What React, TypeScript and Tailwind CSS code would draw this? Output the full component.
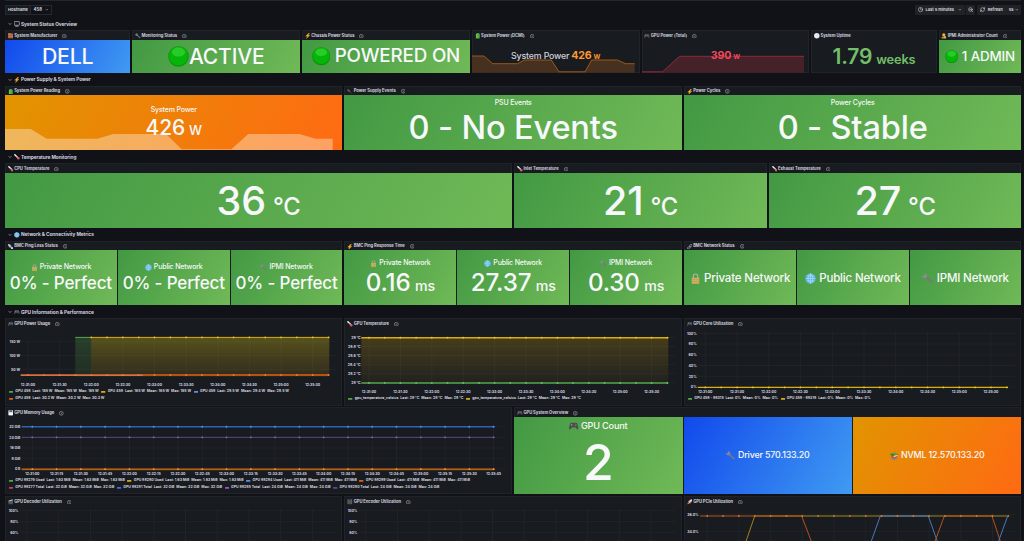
import React from 'react';
import { ChevronDown, Clock, RefreshCw, ZoomOut } from 'lucide-react';

type Tone = 'green' | 'blue' | 'orange';

const tones: Record<Tone, string> = {
  green: 'bg-[linear-gradient(120deg,#429943,#70b957)]',
  blue: 'bg-[linear-gradient(120deg,#1149ec,#409bf2)]',
  orange: 'bg-[linear-gradient(120deg,#e19400,#ff6a13)]',
};

const icons: Record<string, React.ReactNode> = {
  dot: (
    <>
      <circle cx="8" cy="8" r="7.8" fill="#079407" />
      <circle cx="8" cy="7.6" r="7.2" fill="#06b50a" />
      <ellipse cx="8" cy="4.6" rx="5" ry="3.4" fill="#3fdc3d" opacity="0.6" />
    </>
  ),
  bricks: (
    <>
      <rect x="0" y="1" width="16" height="14" fill="#a8553a" />
      <path d="M0 5h16M0 10h16M5 1v4M11 5v5M5 10v5M12 10v5" stroke="#d9a58c" strokeWidth="1" />
      <rect x="1" y="1" width="6" height="3" fill="#d98f58" />
    </>
  ),
  monitor: (
    <>
      <rect x="0.8" y="1.5" width="14.4" height="10.5" rx="1" fill="#16181c" stroke="#d5d8e0" strokeWidth="1.6" />
      <path d="M3.5 14.6h9" stroke="#d5d8e0" strokeWidth="2" />
    </>
  ),
  wrench: (
    <>
      <path d="M5.5 5.5L14 13.5" stroke="#7b7681" strokeWidth="3" strokeLinecap="round" />
      <path d="M1 3.5a3 3 0 0 0 5.6 2A3 3 0 0 0 4 1l.6 2.6L3.2 5z" fill="#8f8d97" stroke="#8f8d97" strokeWidth="1" />
    </>
  ),
  bolt: <path d="M11 0L2 9h5l-3 7 10-9.5H9L13 0z" fill="#ffb02a" stroke="#ffb02a" strokeWidth="0.8" />,
  battery: (
    <>
      <rect x="5.5" y="0" width="5" height="2" fill="#a9b4a5" />
      <rect x="2.5" y="1.5" width="11" height="14.5" rx="1.5" fill="#4caf3d" />
      <path d="M5 3v11" stroke="#9be07f" strokeWidth="1.4" />
    </>
  ),
  gamepad: (
    <>
      <path
        d="M3.5 3h9c2 0 3.3 7.5 3.3 9.8 0 2-2.3 1.8-3 .3L11.6 11H4.4l-1.2 2.1c-.7 1.5-3 1.7-3-.3 0-2.3 1.3-9.8 3.3-9.8z"
        fill="#4b4d53"
      />
      <path d="M3 6.5h3M4.5 5v3" stroke="#a5a7ad" strokeWidth="0.9" />
      <circle cx="11.6" cy="5.4" r="0.9" fill="#e0463f" />
      <circle cx="13" cy="7" r="0.8" fill="#4f8ce0" />
      <circle cx="10.5" cy="7" r="0.8" fill="#d7a73b" />
    </>
  ),
  clock: (
    <>
      <circle cx="8" cy="8" r="7.8" fill="#eceef2" />
      <path d="M8 4v4l3 2" stroke="#a8abb3" strokeWidth="0.9" fill="none" />
    </>
  ),
  person: (
    <>
      <circle cx="8" cy="5" r="4.5" fill="#f2b632" />
      <path d="M1 16c0-5 3-7 7-7s7 2 7 7z" fill="#c98e22" />
      <rect x="9" y="9" width="5" height="6" fill="#ddb860" />
    </>
  ),
  thermometer: (
    <>
      <path d="M2.5 2l9 9" stroke="#f0f0f4" strokeWidth="4" strokeLinecap="round" />
      <path d="M7 6.6l5 5" stroke="#d8454c" strokeWidth="2" />
      <circle cx="12.2" cy="12.2" r="3.6" fill="#dc5a62" />
    </>
  ),
  plug: (
    <>
      <path d="M3 3l5 5" stroke="#666a70" strokeWidth="4" />
      <path d="M8 8c4 0 2 6 7 6" stroke="#4d5157" strokeWidth="1.6" fill="none" />
      <path d="M1 4l2-3M4 1L1 3" stroke="#b59a5a" strokeWidth="1.2" />
    </>
  ),
  globe: (
    <>
      <circle cx="8" cy="8" r="7.6" fill="#59b2e2" />
      <path
        d="M1 8h14M8 1v14M2.4 4.5h11.2M2.4 11.5h11.2M8 .8C3.4 4.6 3.4 11.4 8 15.2M8 .8c4.6 3.8 4.6 10.6 0 14.4"
        stroke="#c9e9f8"
        strokeWidth="0.8"
        fill="none"
      />
    </>
  ),
  lock: (
    <>
      <path d="M4.8 8V4.6a3.2 3.2 0 0 1 6.4 0V8" stroke="#b0b3a6" strokeWidth="1.7" fill="none" />
      <rect x="2.4" y="7" width="11.2" height="8.6" rx="1.2" fill="#d2b061" />
      <path d="M2.8 9.6h10.4M2.8 12.4h10.4" stroke="#b8954a" strokeWidth="0.8" />
    </>
  ),
  satellite: (
    <>
      <path d="M0 0l7 2 1 6-6-1z" fill="#eceef2" />
      <path d="M8 8l6 1 2 7-7-2z" fill="#d4d7de" />
      <path d="M4 5l7 6M5 11l5-6" stroke="#c5c9d0" strokeWidth="2.4" />
    </>
  ),
  link: (
    <g fill="none" stroke="#c4c7d0" strokeWidth="1.8">
      <rect x="7" y="2" width="8" height="5" rx="2.5" transform="rotate(-45 11 4.5)" />
      <rect x="1" y="8.5" width="8" height="5" rx="2.5" transform="rotate(-45 5 11)" />
    </g>
  ),
  floppy: (
    <>
      <rect x="1" y="1" width="14" height="14" rx="1" fill="#dfe4ea" />
      <rect x="4" y="1" width="8" height="5" fill="#5c6772" />
      <rect x="3" y="9" width="10" height="6" fill="#ffffff" />
    </>
  ),
  clapper: (
    <>
      <rect x="1" y="6" width="14" height="9" fill="#4c5056" />
      <path d="M1 5l12-4 1 3-12 3z" fill="#c7cad0" />
      <path d="M2 9h12" stroke="#8c9097" />
    </>
  ),
  film: (
    <>
      <rect x="1" y="1" width="14" height="14" fill="#474b51" />
      <path d="M3 1v14M13 1v14" stroke="#8d9198" strokeDasharray="2 1.5" strokeWidth="1.4" />
      <path d="M5 8h6" stroke="#8d9198" />
    </>
  ),
  rocket: (
    <>
      <path d="M15 1C9 1 5 6 4 9l3 3c3-1 8-5 8-11z" fill="#cfd3da" />
      <path d="M8 3L3 6 2 9l4-1M13 8l-3 5-3 1 1-4" fill="#d8454c" />
      <path d="M4 10c-2 1-3 3-3 5 2 0 4-1 5-3z" fill="#f0a02e" />
    </>
  ),
  books: (
    <>
      <path d="M1 3l8-2.4L15 3 7 6z" fill="#4aa84a" />
      <path d="M1 3.4v2.4L7 9V6.4L15 3.8v2" fill="#2f7d38" />
      <path d="M2 7l6 3 6-3v3l-6 3-6-3z" fill="#c94f46" />
      <path d="M3 11l6 2.6 6-3.2v2.2L9 16l-6-2.6z" fill="#4a86c6" />
      <path d="M7.4 8.6L15 5.8v1.6L8 10z" fill="#ece7d8" />
    </>
  ),
};

const Icon = ({ name, className = '' }: { name: string; className?: string }) => (
  <svg viewBox="0 0 16 16" className={`shrink-0 ${className}`}>
    {icons[name]}
  </svg>
);

const RowTitle = ({ icon, title }: { icon: string; title: string }) => (
  <div className="flex h-[13px] items-center pl-[3px] pt-[1px]">
    <ChevronDown className="mr-[2.2px] size-[4px]" strokeWidth={3.5} />
    <Icon name={icon} className="mr-[1.1px] size-[5.7px]" />
    <span className="whitespace-nowrap text-[4.77px] font-bold leading-none tracking-[-0.01em]">{title}</span>
  </div>
);

interface PanelProps {
  icon: string;
  title: string;
  span: string;
  info?: boolean;
  children: React.ReactNode;
}

const Panel = ({ icon, title, span, info = true, children }: PanelProps) => (
  <div className={`flex min-w-0 flex-col bg-[#181b1f] shadow-[inset_0_0_0_1px_#202328] ${span}`}>
    <div className="flex h-[9.7px] shrink-0 items-center pl-[2.8px] pt-[1.8px]">
      <Icon name={icon} className="mr-[0.8px] size-[5.6px]" />
      <span className="whitespace-nowrap text-[4.17px] font-bold leading-none tracking-[-0.01em]">{title}</span>
      {info && (
        <svg viewBox="0 0 12 12" className="ml-[5px] size-[4.6px]" fill="none" stroke="#a4a5b2" strokeWidth="1.6">
          <circle cx="6" cy="6" r="5" />
          <path d="M6 5.4V9M6 3v1.2" />
        </svg>
      )}
    </div>
    <div className="flex min-h-0 flex-1 gap-px">{children}</div>
  </div>
);

const Cell = ({ tone, className = '', children }: { tone?: Tone; className?: string; children: React.ReactNode }) => (
  <div
    className={`relative flex min-w-0 flex-1 flex-col items-center overflow-hidden whitespace-nowrap font-[550] tracking-[-0.01em] ${
      tone ? `text-[#f7f8fa] ${tones[tone]}` : ''
    } ${className}`}
  >
    {children}
  </div>
);

const Spark = ({ box, points, fill, stroke }: { box: string; points: string; fill: string; stroke?: string }) => {
  const [w, h] = box.split(' ');
  const pts = points.split(' ');
  const first = pts[0].split(',')[0];
  const last = pts[pts.length - 1].split(',')[0];
  return (
    <svg className="absolute left-0 top-0" width={w} height={h} viewBox={`0 0 ${w} ${h}`}>
      <polygon points={`${first},${h} ${points} ${last},${h}`} fill={fill} />
      {stroke && <polyline points={points} fill="none" stroke={stroke} strokeWidth="0.8" />}
    </svg>
  );
};

interface Line {
  color: string;
  points: string;
  width?: number;
  opacity?: number;
  area?: string;
}

interface ChartProps {
  width: number;
  height: number;
  left: number;
  right: number;
  base: number;
  y: [string, number][];
  x0: number;
  step: number;
  times?: string[];
  timeY?: number;
  lines?: Line[];
  marks?: { y: number; color: string; from?: number }[];
  markStep?: number;
}

const Chart = ({
  width,
  height,
  left,
  right,
  base,
  y,
  x0,
  step,
  times = halfMinutes,
  timeY,
  lines = [],
  marks = [],
  markStep = step / 2,
}: ChartProps) => {
  const top = y[0][1] - 2;
  const count = Math.floor((right - x0) / markStep + 0.1) + 1;
  return (
    <svg width={width} height={height} viewBox={`0 0 ${width} ${height}`} className="shrink-0">
      <defs>
        <linearGradient id="olive" x1="0" y1="0" x2="0" y2="1">
          <stop offset="0" stopColor="#d0bd18" stopOpacity="0.34" />
          <stop offset="1" stopColor="#d0a018" stopOpacity="0.13" />
        </linearGradient>
        <linearGradient id="amber" x1="0" y1="0" x2="0" y2="1">
          <stop offset="0" stopColor="#d8a510" stopOpacity="0.24" />
          <stop offset="1" stopColor="#d8a510" stopOpacity="0.05" />
        </linearGradient>
        <linearGradient id="moss" x1="0" y1="0" x2="0" y2="1">
          <stop offset="0" stopColor="#56a64b" stopOpacity="0.27" />
          <stop offset="1" stopColor="#56a64b" stopOpacity="0.12" />
        </linearGradient>
      </defs>
      <g stroke="#24272c" strokeWidth="0.7">
        {y.map(([label, py]) => (
          <line key={label} x1={left} x2={width - 6} y1={py} y2={py} />
        ))}
        {times.map((t, i) => (
          <line key={t} x1={x0 + i * step} x2={x0 + i * step} y1={top} y2={base} />
        ))}
      </g>
      {lines.map((l, i) => {
        const pts = l.points.split(' ');
        const a = pts[0].split(',')[0];
        const b = pts[pts.length - 1].split(',')[0];
        return (
          <g key={i}>
            {l.area && <polygon points={`${a},${base} ${l.points} ${b},${base}`} fill={l.area} />}
            <polyline points={l.points} fill="none" stroke={l.color} strokeWidth={l.width ?? 1} opacity={l.opacity} />
          </g>
        );
      })}
      {marks.map((m, i) =>
        Array.from({ length: count }, (_, k) => x0 + k * markStep)
          .filter((x) => x >= (m.from ?? 0))
          .map((x) => <circle key={`${i}-${x}`} cx={x} cy={m.y} r="0.9" fill={m.color} />),
      )}
      <g fill="#d4d4e2" className="text-[3.5px] font-bold tracking-[-0.01em]">
        {y.map(([label, py]) => (
          <text key={label} x={left - 1} y={py + 1.4} textAnchor="end">
            {label}
          </text>
        ))}
        {timeY &&
          times.map((t, i) => (
            <text key={t} x={x0 + i * step} y={timeY + 1.5} textAnchor="middle">
              {t}
            </text>
          ))}
      </g>
    </svg>
  );
};

const clockTimes = (count: number, seconds: number) =>
  Array.from({ length: count }, (_, i) => {
    const s = 31 * 60 + i * seconds;
    return `12:${Math.floor(s / 60)}:${String(s % 60).padStart(2, '0')}`;
  });

const halfMinutes = clockTimes(10, 30);
const quarterMinutes = clockTimes(20, 15);

const Legend = ({ items }: { items: [string, string, string, string, string][] }) => (
  <div className="flex h-[7px] items-center gap-[2.6px] whitespace-nowrap pl-[4px] pt-[1px] text-[3.55px] font-bold leading-none">
    {items.map(([color, name, last, mean, max], i) => (
      <div key={i} className="flex items-center gap-[1.9px]">
        <svg width="4.4" height="1.8">
          <rect width="4.4" height="1.8" rx="0.6" fill={color} />
        </svg>
        <span>{name}</span>
        <span>Last: {last}</span>
        <span>Mean: {mean}</span>
        <span>Max: {max}</span>
      </div>
    ))}
  </div>
);

const networks = [
  { icon: 'lock', name: 'Private Network', ping: '0.16' },
  { icon: 'globe', name: 'Public Network', ping: '27.37' },
  { icon: 'wrench', name: 'IPMI Network', ping: '0.30' },
];

const GREEN = '#56a64b';
const YELLOW = '#d6ae14';
const BLUE = '#5b92dd';
const ORANGE = '#e0600f';

const Temperature = ({ value }: { value: string }) => (
  <Cell tone="green" className="justify-center pt-[2px]">
    <div className="flex items-baseline gap-[7px] leading-none">
      <span className="text-[39.5px]">{value}</span>
      <span className="text-[23.8px] font-medium">°C</span>
    </div>
  </Cell>
);

const TopBar = () => (
  <div className="flex h-[17.2px] items-start justify-between border-t border-[#23262b] pt-[4px] text-[4px] font-bold leading-none">
    <div className="flex h-[10px] border border-[#25282e]">
      <span className="flex items-center border-r border-[#25282e] bg-[#181b1f] px-[2px]">Hostname</span>
      <span className="flex items-center gap-[3px] px-[2.5px] text-[4.3px]">
        458
        <ChevronDown className="size-[3.5px]" strokeWidth={3} />
      </span>
    </div>
    <div className="flex gap-[2px]">
      <div className="flex h-[10px] w-[60.5px] items-center rounded-[1px] bg-[#202226] pl-[3px] pr-[2.5px]">
        <Clock className="mr-[2.4px] size-[5.2px]" strokeWidth={2.6} />
        <span className="whitespace-nowrap">Last 5 minutes</span>
        <ChevronDown className="ml-auto mr-[3px] size-[3.5px]" strokeWidth={3.5} />
        <span className="mr-[2px] h-[10px] w-px bg-[#15171b]" />
        <ZoomOut className="size-[5.4px]" strokeWidth={2.6} />
      </div>
      <div className="flex h-[10px] w-[44px] items-center rounded-[1px] bg-[#202226] px-[3px]">
        <RefreshCw className="mr-[2px] size-[5.2px]" strokeWidth={2.6} />
        <span>Refresh</span>
        <span className="ml-auto mr-[1.5px]">5s</span>
        <ChevronDown className="size-[3.5px]" strokeWidth={3.5} />
      </div>
    </div>
  </div>
);

const App: React.FC = () => {
  return (
    <div className="h-[541px] w-[1024px] overflow-hidden bg-[#111217] pl-[5px] pr-[2.55px] font-['Inter',sans-serif] text-[#d0d0de]">
      <TopBar />

      <RowTitle icon="monitor" title="System Status Overview" />
      <div className="grid h-[42.5px] grid-cols-24 gap-x-[2px]">
        <Panel icon="bricks" title="System Manufacturer" span="col-span-3">
          <Cell tone="blue" className="justify-center text-[21.3px] leading-none">
            DELL
          </Cell>
        </Panel>
        <Panel icon="wrench" title="Monitoring Status" span="col-span-4">
          <Cell tone="green" className="justify-center">
            <div className="flex items-center text-[21px] leading-none">
              <Icon name="dot" className="size-[21px]" />
              <span>ACTIVE</span>
            </div>
          </Cell>
        </Panel>
        <Panel icon="bolt" title="Chassis Power Status" span="col-span-4">
          <Cell tone="green" className="justify-center">
            <div className="flex items-center gap-[4.5px] text-[18.8px] leading-none">
              <Icon name="dot" className="size-[18.5px]" />
              <span>POWERED ON</span>
            </div>
          </Cell>
        </Panel>
        <Panel icon="battery" title="System Power (DCMI)" span="col-span-4">
          <Cell className="justify-center">
            <Spark
              box="168 32.8"
              points="0,16 12,16 20.7,23.7 45.7,23.7 52.3,20 79.3,20 87,31.8 113,31.8 119.7,20 145.3,20 153.7,23.7 162.7,23.7"
              fill="#46301f"
              stroke="#b86414"
            />
            <div className="relative flex items-baseline gap-[2px] leading-none">
              <span className="text-[8.8px]">System Power</span>
              <span className="text-[10.6px] font-bold text-[#ff9830]">426</span>
              <span className="text-[6.6px] font-bold text-[#ff9830]">W</span>
            </div>
          </Cell>
        </Panel>
        <Panel icon="gamepad" title="GPU Power (Total)" span="col-span-4">
          <Cell className="justify-center">
            <Spark box="168 32.8" points="0,31.8 20.5,31.8 37.5,16.3 162,16.3" fill="#452229" stroke="#a52d40" />
            <div className="relative flex items-baseline gap-[2px] font-bold leading-none text-[#f2495c]">
              <span className="text-[10.6px]">390</span>
              <span className="text-[6.6px]">W</span>
            </div>
          </Cell>
        </Panel>
        <Panel icon="clock" title="System Uptime" span="col-span-3" info={false}>
          <Cell className="justify-center">
            <div className="flex items-baseline gap-[4px] font-semibold leading-none text-[#73bf69]">
              <span className="text-[21px]">1.79</span>
              <span className="text-[12.8px]">weeks</span>
            </div>
          </Cell>
        </Panel>
        <Panel icon="person" title="IPMI Administrator Count" span="col-span-2">
          <Cell tone="green" className="justify-center">
            <div className="flex items-center gap-[3.5px] text-[13.4px] leading-none">
              <Icon name="dot" className="size-[13.3px]" />
              <span>1 ADMIN</span>
            </div>
          </Cell>
        </Panel>
      </div>

      <RowTitle icon="bolt" title="Power Supply & System Power" />
      <div className="grid h-[64.5px] grid-cols-24 gap-x-[2px]">
        <Panel icon="battery" title="System Power Reading" span="col-span-8">
          <Cell tone="orange" className="pt-[8px]">
            <Spark
              box="338 55"
              points="0,34 25.7,34 41.7,43.7 92.3,43.7 108.3,39 161,39 176.7,54.3 226.3,54.3 243.3,39 294.3,39 310.7,43.7 327.7,43.7"
              fill="rgba(255,236,215,0.42)"
            />
            <div className="relative text-[7px] leading-[13px]">System Power</div>
            <div className="relative flex items-baseline gap-[4px] leading-[24px]">
              <span className="text-[21px]">426</span>
              <span className="text-[13px]">W</span>
            </div>
          </Cell>
        </Panel>
        <Panel icon="plug" title="Power Supply Events" span="col-span-8">
          <Cell tone="green">
            <div className="pt-[1px] text-[7px] leading-[13px]">PSU Events</div>
            <div className="text-[32.6px] leading-[37px]">0 - No Events</div>
          </Cell>
        </Panel>
        <Panel icon="bolt" title="Power Cycles" span="col-span-8">
          <Cell tone="green">
            <div className="pt-[1px] text-[7px] leading-[13px]">Power Cycles</div>
            <div className="text-[32.6px] leading-[37px]">0 - Stable</div>
          </Cell>
        </Panel>
      </div>

      <RowTitle icon="thermometer" title="Temperature Monitoring" />
      <div className="grid h-[64.5px] grid-cols-24 gap-x-[2px]">
        <Panel icon="thermometer" title="CPU Temperature" span="col-span-12">
          <Temperature value="36" />
        </Panel>
        <Panel icon="thermometer" title="Inlet Temperature" span="col-span-6">
          <Temperature value="21" />
        </Panel>
        <Panel icon="thermometer" title="Exhaust Temperature" span="col-span-6">
          <Temperature value="27" />
        </Panel>
      </div>

      <RowTitle icon="globe" title="Network & Connectivity Metrics" />
      <div className="grid h-[64.5px] grid-cols-24 gap-x-[2px]">
        <Panel icon="satellite" title="BMC Ping Loss Status" span="col-span-8">
          {networks.map((n) => (
            <Cell key={n.name} tone="green" className="pt-[10px]">
              <div className="flex items-center gap-[2px] text-[7px] leading-[14px]">
                <Icon name={n.icon} className="size-[7px]" />
                {n.name}
              </div>
              <div className="text-[17px] leading-[18px]">0% - Perfect</div>
            </Cell>
          ))}
        </Panel>
        <Panel icon="bolt" title="BMC Ping Response Time" span="col-span-8">
          {networks.map((n) => (
            <Cell key={n.name} tone="green" className="pt-[6px]">
              <div className="flex items-center gap-[2px] text-[7px] leading-[14px]">
                <Icon name={n.icon} className="size-[7px]" />
                {n.name}
              </div>
              <div className="flex items-baseline gap-[4.5px] leading-[26px]">
                <span className="text-[24.2px]">{n.ping}</span>
                <span className="text-[14.2px]">ms</span>
              </div>
            </Cell>
          ))}
        </Panel>
        <Panel icon="link" title="BMC Network Status" span="col-span-8">
          {networks.map((n) => (
            <Cell key={n.name} tone="green" className="justify-center pt-[1.5px]">
              <div className="flex items-center gap-[3.5px] text-[11.5px] leading-none">
                <Icon name={n.icon} className="size-[11px]" />
                {n.name}
              </div>
            </Cell>
          ))}
        </Panel>
      </div>

      <RowTitle icon="gamepad" title="GPU Information & Performance" />
      <div className="grid grid-cols-24 gap-x-[2px] gap-y-[1.8px]">
        <Panel icon="gamepad" title="GPU Power Usage" span="col-span-8 h-[87.5px]">
          <div>
            <Chart
              width={337}
              height={60}
              left={16}
              right={324.3}
              base={48.5}
              x0={23}
              step={31.63}
              y={[['150 W', 13.7], ['100 W', 27.4], ['50 W', 41.3]]}
              timeY={56.8}
              lines={[
                { color: GREEN, points: '70.3,9.4 86.3,9.4', area: 'url(#moss)' },
                { color: YELLOW, points: '86.3,9.4 324.3,9.4', area: 'url(#olive)' },
                { color: ORANGE, points: '15.7,47 324.3,47', width: 1.7 },
                { color: '#e8a0b0', points: '15.7,47.3 138,47.3', width: 0.7, opacity: 0.8 },
              ]}
              marks={[{ y: 9.4, color: '#f0c81c', from: 86 }, { y: 47, color: '#f47a2c' }]}
            />
            <Legend
              items={[
                [GREEN, 'GPU 458', '165 W', '165 W', '165 W'],
                [YELLOW, 'GPU 458', '165 W', '165 W', '165 W'],
                [BLUE, 'GPU 458', '29.5 W', '29.4 W', '29.5 W'],
              ]}
            />
            <Legend items={[[ORANGE, 'GPU 458', '30.2 W', '30.2 W', '30.3 W']]} />
          </div>
        </Panel>
        <Panel icon="thermometer" title="GPU Temperature" span="col-span-8">
          <div>
            <Chart
              width={337}
              height={67}
              left={17.5}
              right={324.3}
              base={55}
              x0={25}
              step={31.4}
              y={[
                ['29 °C', 9.5],
                ['28.8 °C', 18.5],
                ['28.6 °C', 27.6],
                ['28.4 °C', 36.7],
                ['28.2 °C', 45.7],
                ['28 °C', 54.8],
              ]}
              timeY={63.7}
              lines={[
                { color: YELLOW, points: '17.3,9.7 324.3,9.7', width: 1.5, area: 'url(#amber)' },
                { color: GREEN, points: '17.3,54.9 324.3,54.9', width: 1.5 },
              ]}
              marks={[{ y: 9.7, color: '#f0c81c' }, { y: 54.9, color: '#73bf69' }]}
            />
            <Legend
              items={[
                [GREEN, 'gpu_temperature_celsius', '28 °C', '28 °C', '28 °C'],
                [YELLOW, 'gpu_temperature_celsius', '29 °C', '29 °C', '29 °C'],
              ]}
            />
          </div>
        </Panel>
        <Panel icon="gamepad" title="GPU Core Utilization" span="col-span-8">
          <div>
            <Chart
              width={337}
              height={67}
              left={13.7}
              right={324}
              base={59}
              x0={21.3}
              step={31.74}
              y={[['100%', 5.3], ['80%', 16], ['60%', 26.8], ['40%', 37.5], ['20%', 48.3], ['0%', 59]]}
              timeY={63.7}
              lines={[{ color: YELLOW, points: '13.7,59.4 324,59.4', width: 1.4 }]}
              marks={[{ y: 59.4, color: '#f0c81c' }]}
            />
            <Legend
              items={[
                [GREEN, 'GPU 458 - 88315', '0%', '0%', '0%'],
                [YELLOW, 'GPU 458 - 88318', '0%', '0%', '0%'],
              ]}
            />
          </div>
        </Panel>

        <Panel icon="floppy" title="GPU Memory Usage" span="col-span-12 h-[87px]">
          <div>
            <Chart
              width={507}
              height={60}
              left={16.3}
              right={489.5}
              base={52.5}
              x0={27.3}
              step={24.28}
              times={quarterMinutes}
              y={[['32 GiB', 9.7], ['24 GiB', 20.3], ['16 GiB', 31], ['8 GiB', 41.7], ['0 B', 52]]}
              timeY={56.8}
              markStep={24.28}
              lines={[
                { color: '#2f62b4', points: '16.7,9.7 489.5,9.7', width: 1.6 },
                { color: '#5f4b8b', points: '16.7,20.3 489.5,20.3', width: 0.9 },
                { color: '#b98a12', points: '16.7,52.7 489.5,52.7', width: 0.8 },
                { color: ORANGE, points: '16.7,52 489.5,52', width: 1.1 },
              ]}
              marks={[
                { y: 9.7, color: '#5794f2' },
                { y: 20.3, color: '#8470b5' },
                { y: 52.2, color: '#ff9830' },
              ]}
            />
            <Legend
              items={[
                [GREEN, 'GPU 88276 Used', '1.63 MiB', '1.63 MiB', '1.63 MiB'],
                [YELLOW, 'GPU 88280 Used', '1.63 MiB', '1.63 MiB', '1.63 MiB'],
                [BLUE, 'GPU 88284 Used', '411 MiB', '411 MiB', '411 MiB'],
                [ORANGE, 'GPU 88289 Used', '411 MiB', '411 MiB', '411 MiB'],
              ]}
            />
            <Legend
              items={[
                ['#d8384c', 'GPU 88277 Total', '32 GiB', '32 GiB', '32 GiB'],
                ['#3871dc', 'GPU 88281 Total', '32 GiB', '32 GiB', '32 GiB'],
                ['#a352cc', 'GPU 88285 Total', '24 GiB', '24 GiB', '24 GiB'],
                ['#5f4b8b', 'GPU 88290 Total', '24 GiB', '24 GiB', '24 GiB'],
              ]}
            />
          </div>
        </Panel>
        <Panel icon="gamepad" title="GPU System Overview" span="col-span-12">
          <Cell tone="green">
            <div className="flex items-center gap-[2px] text-[9.1px] leading-[18px]">
              <Icon name="gamepad" className="size-[9.5px]" />
              GPU Count
            </div>
            <div className="text-[50px] leading-[54px]">2</div>
          </Cell>
          <Cell tone="blue" className="justify-center">
            <div className="flex items-center gap-[3px] text-[8.9px] leading-none">
              <Icon name="wrench" className="size-[9px]" />
              Driver 570.133.20
            </div>
          </Cell>
          <Cell tone="orange" className="justify-center">
            <div className="flex items-center gap-[3px] text-[8.9px] leading-none">
              <Icon name="books" className="size-[8px]" />
              NVML 12.570.133.20
            </div>
          </Cell>
        </Panel>

        <Panel icon="clapper" title="GPU Decoder Utilization" span="col-span-8 h-[87px]">
          <Chart
            width={337}
            height={60}
            left={14.3}
            right={324}
            base={60}
            x0={22}
            step={31.7}
            y={[['100%', 4.7], ['80%', 15.4], ['60%', 26.2]]}
          />
        </Panel>
        <Panel icon="film" title="GPU Encoder Utilization" span="col-span-8">
          <Chart
            width={337}
            height={60}
            left={14.3}
            right={324}
            base={60}
            x0={21.7}
            step={31.7}
            y={[['100%', 4.7], ['80%', 15.4], ['60%', 26.2]]}
          />
        </Panel>
        <Panel icon="rocket" title="GPU PCIe Utilization" span="col-span-8">
          <Chart
            width={337}
            height={60}
            left={15.5}
            right={324}
            base={60}
            x0={23.2}
            step={31.7}
            y={[['36.0%', 8.7], ['34.0%', 25.7]]}
            lines={[
              { color: '#a08318', points: '58.7,45 70.7,10 323.7,10' },
              { color: '#b8501c', points: '16,10 117.7,10 131,45' },
              { color: '#4d78b8', points: '183.8,45 196.3,10 244.3,10 256.8,45' },
              { color: '#b8501c', points: '247.5,45 260.3,10 308,10 319.5,45' },
              { color: '#4d78b8', points: '311,45 323.7,10' },
            ]}
            marks={[{ y: 10, color: '#d07a30' }]}
          />
        </Panel>
      </div>
    </div>
  );
};

export default App;
